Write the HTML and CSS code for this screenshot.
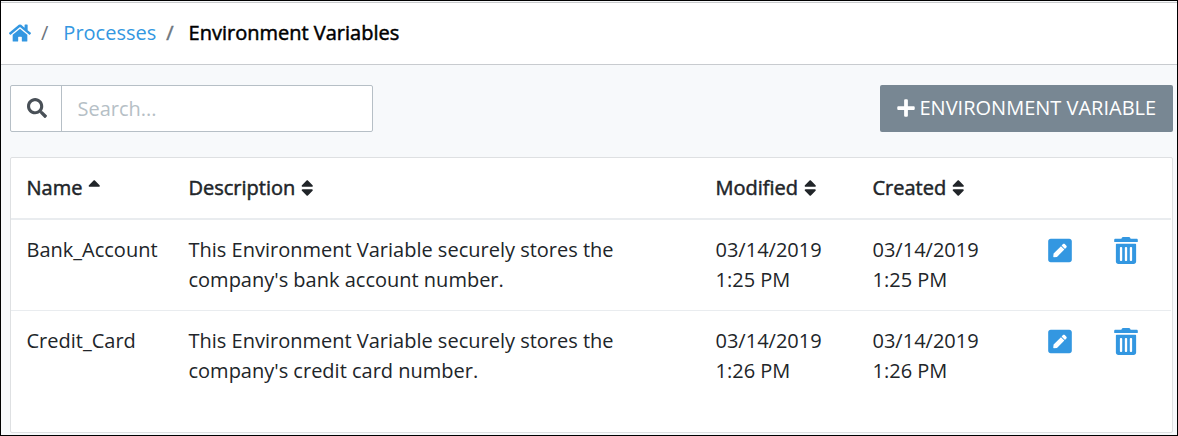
FILE: index.html
```html
<!DOCTYPE html>
<html lang="en">
<head>
<meta charset="utf-8">
<title>Environment Variables</title>
<link rel="stylesheet" href="styles.css">
</head>
<body>
<svg class="defs" width="0" height="0">
  <symbol id="sort" viewBox="0 0 320 512"><path d="M41 288h238c21.400 0 32.100 25.900 17 41L177 448c-9.400 9.400-24.600 9.400-33.900 0L24 329c-15.100-15.100-4.400-41 17-41zm255-105L177 64c-9.400-9.400-24.600-9.400-33.900 0L24 183c-15.100 15.100-4.400 41 17 41h238c21.400 0 32.100-25.900 17-41z"/></symbol>
  <symbol id="sort-up" viewBox="0 0 320 512"><path d="M279 224H41c-21.400 0-32.100-25.900-17-41L143 64c9.400-9.400 24.600-9.400 33.900 0l119 119c15.200 15.100 4.500 41-16.900 41z"/></symbol>
  <symbol id="edit" viewBox="0 0 448 512"><path d="M400 480H48c-26.500 0-48-21.500-48-48V80c0-26.500 21.500-48 48-48h352c26.500 0 48 21.500 48 48v352c0 26.500-21.500 48-48 48zM238.100 177.900L102.400 313.600l-6.300 57.100c-.8 7.600 5.600 14.100 13.300 13.300l57.100-6.300L302.200 242c2.300-2.300 2.300-6.100 0-8.500L246.700 178c-2.500-2.400-6.300-2.400-8.600-.1zM345 165.100L314.900 135c-9.400-9.400-24.600-9.400-33.900 0l-23.100 23.100c-2.300 2.300-2.300 6.100 0 8.500l55.500 55.500c2.300 2.300 6.100 2.300 8.500 0L345 199c9.300-9.300 9.300-24.500 0-33.900z"/></symbol>
  <symbol id="trash" viewBox="0 0 448 512"><path fill-rule="evenodd" d="M0 84V56c0-13.300 10.700-24 24-24h112l9.400-18.700C149.500 5.100 157.800 0 166.900 0h114.300c9.100 0 17.400 5.100 21.500 13.300L312 32h112c13.300 0 24 10.700 24 24v28c0 6.600-5.400 12-12 12H12C5.400 96 0 90.600 0 84zm416 56v324c0 26.500-21.500 48-48 48H80c-26.500 0-48-21.500-48-48V140c0-6.600 5.400-12 12-12h360c6.600 0 12 5.400 12 12zM108 204v236c0 8.800 7.200 16 16 16h12c8.800 0 16-7.200 16-16V204c0-8.800-7.200-16-16-16h-12c-8.800 0-16 7.200-16 16zm94 0v236c0 8.800 7.200 16 16 16h12c8.800 0 16-7.200 16-16V204c0-8.800-7.200-16-16-16h-12c-8.800 0-16 7.200-16 16zm94 0v236c0 8.800 7.200 16 16 16h12c8.800 0 16-7.200 16-16V204c0-8.800-7.200-16-16-16h-12c-8.800 0-16 7.200-16 16z"/></symbol>
</svg>
<div class="page">
  <nav class="breadcrumb">
    <a class="home"><svg class="home-icon" viewBox="0 0 576 512"><path d="M280.400 148.300L96 300.100V464a16 16 0 0 0 16 16l112.100-.3a16 16 0 0 0 15.900-16V368a16 16 0 0 1 16-16h64a16 16 0 0 1 16 16v95.600a16 16 0 0 0 16 16.100L464 480a16 16 0 0 0 16-16V300L295.700 148.300a12.200 12.200 0 0 0-15.300 0zM571.600 251.500L488 182.600V44.100a12 12 0 0 0-12-12h-56a12 12 0 0 0-12 12v72.600L318.500 43a48 48 0 0 0-61 0L4.300 251.500a12 12 0 0 0-1.600 16.900l25.500 31a12 12 0 0 0 16.900 1.600L280.400 107.300a12.200 12.200 0 0 1 15.300 0L530.900 301a12 12 0 0 0 16.900-1.600l25.500-31a12 12 0 0 0-1.700-16.900z"/></svg></a>
    <span class="slash">/</span>
    <a class="link">Processes</a>
    <span class="slash heavy">/</span>
    <span class="current heavy">Environment Variables</span>
  </nav>
  <main class="content">
    <div class="toolbar">
      <div class="search">
        <div class="search-addon"><svg class="search-icon" viewBox="0 0 512 512"><path d="M505 442.700L405.300 343c-4.500-4.500-10.600-7-17-7H372c27.600-35.300 44-79.700 44-128C416 93.100 322.900 0 208 0S0 93.100 0 208s93.100 208 208 208c48.300 0 92.700-16.400 128-44v16.300c0 6.400 2.500 12.500 7 17l99.700 99.700c9.400 9.400 24.600 9.400 33.900 0l28.300-28.300c9.400-9.400 9.400-24.600.1-34zM208 336c-70.700 0-128-57.200-128-128 0-70.700 57.200-128 128-128 70.700 0 128 57.200 128 128 0 70.700-57.200 128-128 128z"/></svg></div>
        <div class="search-input">Search...</div>
      </div>
      <div class="button"><svg class="plus-icon" viewBox="0 0 448 512"><path d="M416 208H272V64c0-17.700-14.300-32-32-32h-32c-17.700 0-32 14.300-32 32v144H32c-17.700 0-32 14.300-32 32v32c0 17.700 14.300 32 32 32h144v144c0 17.700 14.300 32 32 32h32c17.700 0 32-14.300 32-32V304h144c17.700 0 32-14.300 32-32v-32c0-17.700-14.300-32-32-32z"/></svg><span>ENVIRONMENT VARIABLE</span></div>
    </div>
    <section class="card">
      <div class="row head heavy">
        <div class="cell">Name<svg class="sort"><use href="#sort-up"/></svg></div>
        <div class="cell">Description<svg class="sort"><use href="#sort"/></svg></div>
        <div class="cell">Modified<svg class="sort"><use href="#sort"/></svg></div>
        <div class="cell">Created<svg class="sort"><use href="#sort"/></svg></div>
      </div>
      <div class="row item">
        <div>Bank_Account</div>
        <div>This Environment Variable securely stores the<br>company's bank account number.</div>
        <div>03/14/2019<br>1:25 PM</div>
        <div>03/14/2019<br>1:25 PM</div>
        <div class="actions"><svg class="action"><use href="#edit"/></svg><svg class="action"><use href="#trash"/></svg></div>
      </div>
      <div class="row item">
        <div>Credit_Card</div>
        <div>This Environment Variable securely stores the<br>company's credit card number.</div>
        <div>03/14/2019<br>1:26 PM</div>
        <div>03/14/2019<br>1:26 PM</div>
        <div class="actions"><svg class="action"><use href="#edit"/></svg><svg class="action"><use href="#trash"/></svg></div>
      </div>
    </section>
  </main>
</div>
</body>
</html>
```
FILE: styles.css
```css
* { box-sizing: border-box; }
body {
  margin: 0;
  font: 400 20px/30px "Open Sans", sans-serif;
  color: #212529;
  overflow: hidden;
}
svg { fill: currentColor; display: block; flex: none; }
.defs { display: none; }
.page {
  height: 436px;
  border: 1px solid #000;
  background: #f7f9fb;
  display: flex;
  flex-direction: column;
  padding-top: 1px;
}
.breadcrumb {
  height: 63px;
  border-top: 1px solid #c9cbcd;
  border-bottom: 1px solid #c8cbcf;
  background: #fff;
  display: flex;
  align-items: center;
  padding: 0 0 1px 8px;
}
.home, .link, .action { color: #3397e1; }
.home-icon { width: 22px; height: 20px; }
.slash { color: #6c757d; margin-left: 10px; }
.link { margin-left: 15px; }
.current { color: #000; margin-left: 15px; }
.heavy { -webkit-text-stroke: 0.5px currentColor; }
.content { flex: 1; padding: 20px 4px 2px 9px; display: flex; flex-direction: column; }
.toolbar { display: flex; justify-content: space-between; height: 47px; }
.search {
  display: flex;
  width: 363px;
  border: 1px solid #b6bfc6;
  border-radius: 2px;
  background: #fff;
}
.search-addon {
  width: 51px;
  border-right: 1px solid #b6bfc6;
  display: flex;
  align-items: center;
  justify-content: center;
  color: #495057;
}
.search-icon { width: 20px; height: 20px; margin: 0 0 2px 1px; }
.search-input { padding: 8px 15.5px; color: #b6bfc6; }
.button {
  width: 293px;
  border-radius: 2px;
  background: #788793;
  color: #fff;
  display: flex;
  align-items: center;
  padding: 0 0 2px 16.5px;
  gap: 5px;
  white-space: nowrap;
}
.plus-icon { width: 18px; height: 20px; }
.card {
  flex: 1;
  margin-top: 25px;
  border: 1px solid #dee0e2;
  border-radius: 2px;
  background: #fff;
}
.row {
  display: grid;
  grid-template-columns: 162px 527px 157px 175px 1fr;
  padding-left: 15.5px;
  margin-right: 1px;
  white-space: nowrap;
}
.head { height: 62px; padding-top: 15px; border-bottom: 2px solid #e9ecef; }
.cell { display: flex; align-items: center; gap: 6px; height: 30px; }
.sort { width: 12.5px; height: 20px; }
.item { height: 90px; padding-top: 15px; }
.item + .item { border-top: 1px solid #e9ecef; }
.actions { display: flex; gap: 42px; padding: 2px 0 0 0.5px; }
.action { width: 24px; height: 27px; }
```
